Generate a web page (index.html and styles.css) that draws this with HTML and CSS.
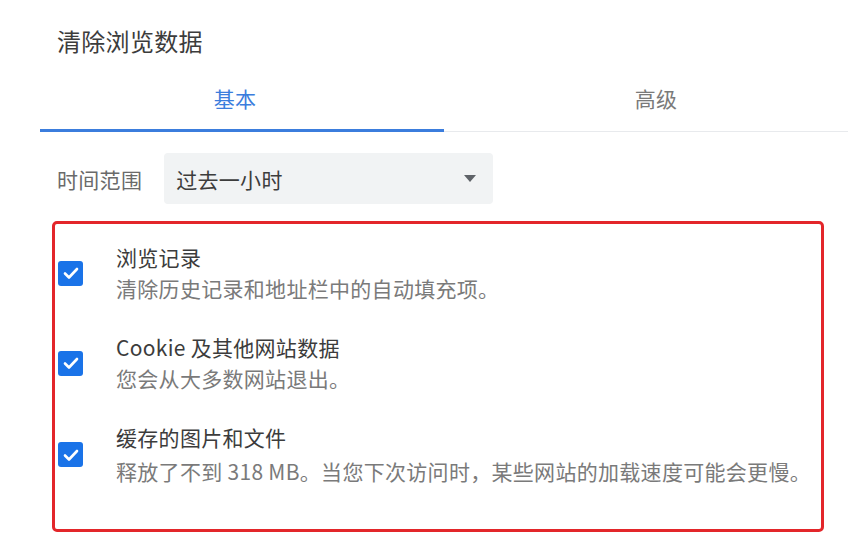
FILE: index.html
```html
<!DOCTYPE html>
<html lang="zh-CN">
<head>
<meta charset="utf-8">
<title>清除浏览数据</title>
<link rel="stylesheet" href="styles.css">
</head>
<body>
<div class="dialog">
  <h1 class="title">清除浏览数据</h1>
  <div class="tabs">
    <div class="tab tab-basic active">基本</div>
    <div class="tab tab-adv">高级</div>
  </div>
  <div class="range-row">
    <span class="range-label">时间范围</span>
    <div class="select">
      <span class="select-value">过去一小时</span>
      <svg class="select-arrow" width="12" height="7" viewBox="0 0 12 7"><path d="M0 0 L12 0 L6 7 Z" fill="#5f6368"/></svg>
    </div>
  </div>
  <div class="options">
    <div class="option">
      <span class="checkbox"><svg width="24" height="24" viewBox="0 0 24 24"><path d="M6 12.5 L10 16.5 L18 8" fill="none" stroke="#fff" stroke-width="2.6" stroke-linecap="round" stroke-linejoin="round"/></svg></span>
      <div class="option-text">
        <div class="option-title">浏览记录</div>
        <div class="option-desc">清除历史记录和地址栏中的自动填充项。</div>
      </div>
    </div>
    <div class="option">
      <span class="checkbox"><svg width="24" height="24" viewBox="0 0 24 24"><path d="M6 12.5 L10 16.5 L18 8" fill="none" stroke="#fff" stroke-width="2.6" stroke-linecap="round" stroke-linejoin="round"/></svg></span>
      <div class="option-text">
        <div class="option-title">Cookie 及其他网站数据</div>
        <div class="option-desc">您会从大多数网站退出。</div>
      </div>
    </div>
    <div class="option">
      <span class="checkbox"><svg width="24" height="24" viewBox="0 0 24 24"><path d="M6 12.5 L10 16.5 L18 8" fill="none" stroke="#fff" stroke-width="2.6" stroke-linecap="round" stroke-linejoin="round"/></svg></span>
      <div class="option-text">
        <div class="option-title">缓存的图片和文件</div>
        <div class="option-desc option-desc-last">释放了不到 318 MB。当您下次访问时，某些网站的加载速度可能会更慢。</div>
      </div>
    </div>
  </div>
</div>
</body>
</html>
```

FILE: styles.css
```css
* { box-sizing: border-box; }
html, body {
  margin: 0;
  padding: 0;
  background: #ffffff;
}
body {
  font-family: "Noto Sans CJK SC", "Noto Sans", "Liberation Sans", sans-serif;
  color: #3c3c3c;
  letter-spacing: 0.3px;
}
.dialog {
  width: 861px;
  height: 552px;
  overflow: hidden;
}
.title {
  margin: 0;
  padding: 25px 0 0 57px;
  font-size: 24px;
  line-height: 32px;
  font-weight: 400;
  color: #3c3c3c;
}
.tabs {
  display: grid;
  grid-template-columns: 1fr 1fr;
  margin: 0 13px 0 40px;
  border-bottom: 1px solid #e8eaed;
}
.tab {
  padding: 26px 0 16px;
  text-align: center;
  font-size: 21px;
  line-height: 30px;
  color: #7a7a7a;
  border-bottom: 3px solid transparent;
  margin-bottom: -1px;
}
.tab-basic { padding-right: 14px; }
.tab-adv { padding-left: 20px; }
.tab.active {
  color: #3b7ddd;
  border-bottom-color: #3b7ddd;
}
.range-row {
  display: flex;
  align-items: center;
  margin-top: 21px;
  padding-left: 57px;
  gap: 22px;
}
.range-label {
  font-size: 21px;
  line-height: 30px;
  color: #6a6a6a;
}
.select {
  display: flex;
  align-items: center;
  justify-content: space-between;
  width: 329px;
  height: 51px;
  padding: 0 17px 0 12px;
  background: #f1f3f4;
  border-radius: 4px;
}
.select-value {
  font-size: 21px;
  line-height: 30px;
  color: #3c3c3c;
}
.options {
  margin: 17px 0 0 52px;
  width: 772px;
  height: 311px;
  border: 3px solid #e3262a;
  border-radius: 5px;
  padding: 18px 0 0 3px;
  display: flex;
  flex-direction: column;
  gap: 28px;
}
.option {
  display: flex;
  align-items: center;
  gap: 33px;
}
.checkbox {
  flex: none;
  width: 25px;
  height: 25px;
  background: #1a73e8;
  border-radius: 3px;
  display: flex;
  align-items: center;
  justify-content: center;
}
.option-title {
  font-size: 21px;
  line-height: 31px;
  color: #3c3c3c;
}
.option-desc {
  font-size: 21px;
  line-height: 31px;
  color: #7a7a7a;
}
.option-desc-last {
  margin-top: 3px;
}
```
